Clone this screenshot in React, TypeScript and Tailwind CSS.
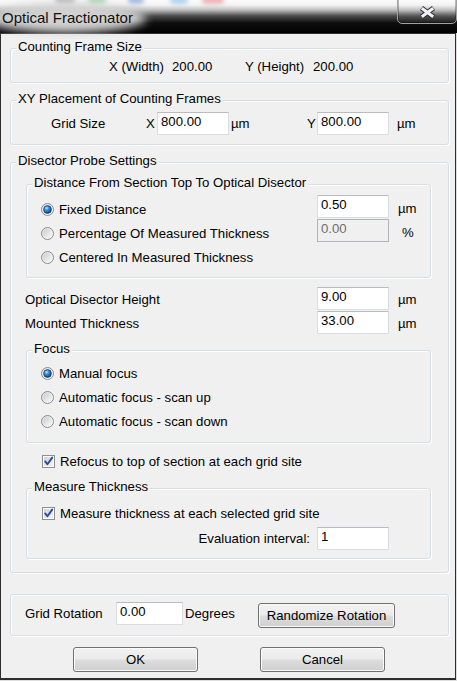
import React from "react";

function Radio({ checked }: { checked?: boolean }) {
  return (
    <svg width="13" height="13" viewBox="0 0 13 13" className="shrink-0">
      <defs>
        <linearGradient id="rOuter" x1="0" y1="0" x2="1" y2="1">
          <stop offset="0" stopColor="#dcdcdc" />
          <stop offset="1" stopColor="#fdfdfd" />
        </linearGradient>
        <linearGradient id="rInner" x1="0" y1="0" x2="1" y2="1">
          <stop offset="0" stopColor="#c9ccd1" />
          <stop offset="1" stopColor="#f8f8f8" />
        </linearGradient>
        <radialGradient id="rDot" cx="0.38" cy="0.32" r="0.7">
          <stop offset="0" stopColor="#c4ecff" />
          <stop offset="0.35" stopColor="#3b9be0" />
          <stop offset="1" stopColor="#0b3f80" />
        </radialGradient>
      </defs>
      <circle cx="6.5" cy="6.5" r="6" fill="url(#rOuter)" stroke="#8a8c8e" strokeWidth="1" />
      {checked ? (
        <>
          <circle cx="6.5" cy="6.5" r="4.8" fill="#ffffff" />
          <circle cx="6.5" cy="6.5" r="3.9" fill="url(#rDot)" stroke="#17386a" strokeWidth="0.8" />
        </>
      ) : (
        <circle cx="6.5" cy="6.5" r="4.3" fill="url(#rInner)" />
      )}
    </svg>
  );
}

function Check() {
  return (
    <svg width="13" height="13" viewBox="0 0 13 13" className="shrink-0">
      <defs>
        <linearGradient id="cbInner" x1="0" y1="0" x2="1" y2="1">
          <stop offset="0" stopColor="#cfd1d4" />
          <stop offset="1" stopColor="#f6f6f6" />
        </linearGradient>
      </defs>
      <rect x="0.5" y="0.5" width="12" height="12" fill="#ffffff" stroke="#8e8f8f" />
      <rect x="2" y="2" width="9" height="9" fill="url(#cbInner)" />
      <path d="M3.2 6.4 L5.4 9.3 L10.2 2.6" fill="none" stroke="#2b4a9e" strokeWidth="1.9" strokeLinejoin="round" strokeLinecap="round" />
    </svg>
  );
}

function GroupBox({
  caption,
  className,
  children,
}: {
  caption?: string;
  className: string;
  children?: React.ReactNode;
}) {
  return (
    <div
      className={`relative shrink-0 rounded-[3px] border border-[#d5dfe5] shadow-[inset_1px_1px_0_#ffffff,1px_1px_0_#ffffff] ${className}`}
    >
      {caption && (
        <span className="absolute left-[5px] top-[-10px] whitespace-nowrap bg-[#f0f0f0] px-[2px] leading-[15px]">
          {caption}
        </span>
      )}
      {children}
    </div>
  );
}

function Field({
  value,
  className,
  disabled,
}: {
  value: string;
  className: string;
  disabled?: boolean;
}) {
  return (
    <div
      className={`h-[23px] shrink-0 self-start border pl-[3px] pt-[1px] leading-[15px] ${
        disabled
          ? "border-[#b1b4b8] bg-[#f0f0f0] text-[#6d6d6d]"
          : "border-[#dadde2] border-t-[#b9bcc1] bg-white text-black"
      } ${className}`}
    >
      {value}
    </div>
  );
}

function Button({ label, className }: { label: string; className: string }) {
  return (
    <div
      className={`flex h-[25px] shrink-0 items-center justify-center rounded-[3px] border border-[#707070] bg-[linear-gradient(180deg,#f2f2f2_0%,#ebebeb_48%,#dddddd_52%,#cfcfcf_100%)] leading-[15px] shadow-[inset_0_0_0_1px_#fbfbfb] ${className}`}
    >
      {label}
    </div>
  );
}

export default function App() {
  return (
    <div className="relative h-[681px] w-[457px] overflow-hidden bg-[#dedede] text-[13.2px] text-black [font-family:'Liberation_Sans',Arial,sans-serif]">
      {/* Title bar */}
      <div className="relative flex h-[33px] items-start bg-[linear-gradient(180deg,#fbfbfb_0px,#f3f3f3_5px,#bdbdbd_10px,#4a4a4a_16px,#0e0e0e_23px,#000000_33px)] pl-[2px] pt-[9px]">
        <div className="absolute left-[55px] top-[-4px] h-[8px] w-[20px] rounded-full bg-[#7c7c7c] opacity-50 blur-[2px]" />
        <div className="absolute left-[88px] top-[-4px] h-[8px] w-[18px] rounded-full bg-[#62b873] opacity-50 blur-[2px]" />
        <div className="absolute left-[128px] top-[-4px] h-[8px] w-[16px] rounded-full bg-[#5a7fd0] opacity-50 blur-[2px]" />
        <div className="absolute left-[170px] top-[-4px] h-[8px] w-[18px] rounded-full bg-[#6eaee6] opacity-50 blur-[2px]" />
        <div className="absolute left-[202px] top-[-4px] h-[8px] w-[22px] rounded-full bg-[#e27070] opacity-50 blur-[2px]" />
        <div className="absolute left-[-14px] top-[3px] h-[30px] w-[160px] rounded-[50%] bg-[#d2d2d2] blur-[5px]" />
        <span className="relative text-[15px] leading-[18px] text-[#111111]">Optical Fractionator</span>
        <div className="absolute right-[0px] top-[-2px] flex h-[26px] w-[60px] items-center justify-center rounded-b-[5px] border border-[#a0a0a0] bg-[rgba(255,255,255,0.06)] pt-[2px] shadow-[inset_0_0_0_1px_rgba(0,0,0,0.25)]">
          <svg width="17" height="13" viewBox="0 0 17 13">
            <path d="M2.5 2 L14.5 11 M14.5 2 L2.5 11" stroke="#2a2a2a" strokeWidth="5" strokeLinecap="butt" />
            <path d="M2.8 2.2 L14.2 10.8 M14.2 2.2 L2.8 10.8" stroke="#f2f2f4" strokeWidth="3" strokeLinecap="butt" />
          </svg>
        </div>
      </div>

      {/* Body */}
      <div className="flex h-[647px] w-[456px] flex-col border border-b-2 border-[#2e2e2e] bg-[#f0f0f0]">
        <GroupBox caption="Counting Frame Size" className="ml-[9px] mt-[14px] h-[35px] w-[439px]">
          <div className="flex pl-[98px] pt-[10px] leading-[15px]">
            <span className="w-[63px]">X (Width)</span>
            <span className="w-[73px]">200.00</span>
            <span className="w-[68px]">Y (Height)</span>
            <span>200.00</span>
          </div>
        </GroupBox>

        <GroupBox caption="XY Placement of Counting Frames" className="ml-[9px] mt-[17px] h-[45px] w-[439px]">
          <div className="flex h-[34px] items-center pl-[40px] pt-[11px] leading-[15px]">
            <span className="w-[95px] self-center">Grid Size</span>
            <span className="w-[11px] self-center">X</span>
            <Field value="800.00" className="w-[72px]" />
            <span className="ml-[2px] w-[76px] self-center">µm</span>
            <span className="w-[10px] self-center">Y</span>
            <Field value="800.00" className="w-[72px]" />
            <span className="ml-[8px] self-center">µm</span>
          </div>
        </GroupBox>

        <GroupBox caption="Disector Probe Settings" className="ml-[9px] mt-[17px] flex h-[411px] w-[439px] flex-col">
          <GroupBox
            caption="Distance From Section Top To Optical Disector"
            className="ml-[15px] mt-[21px] flex h-[94px] w-[405px] flex-col pt-[10px]"
          >
            <div className="flex h-[24px] leading-[15px]">
              <div className="flex w-[290px] items-center pl-[14px] pt-[5px]">
                <Radio checked />
                <span className="ml-[5px]">Fixed Distance</span>
              </div>
              <Field value="0.50" className="w-[72px]" />
              <span className="ml-[9px] flex items-center pt-[3px]">µm</span>
            </div>
            <div className="flex h-[24px] leading-[15px]">
              <div className="flex w-[290px] items-center pl-[14px] pt-[5px]">
                <Radio />
                <span className="ml-[5px]">Percentage Of Measured Thickness</span>
              </div>
              <Field value="0.00" className="w-[72px]" disabled />
              <span className="ml-[13px] flex items-center pt-[3px]">%</span>
            </div>
            <div className="flex h-[24px] leading-[15px]">
              <div className="flex w-[290px] items-center pl-[14px] pt-[5px]">
                <Radio />
                <span className="ml-[5px]">Centered In Measured Thickness</span>
              </div>
            </div>
          </GroupBox>

          <div className="mt-[9px] flex h-[24px] leading-[15px]">
            <span className="flex w-[306px] items-center pl-[14px]">Optical Disector Height</span>
            <Field value="9.00" className="w-[72px]" />
            <span className="ml-[9px] flex items-center">µm</span>
          </div>
          <div className="flex h-[24px] leading-[15px]">
            <span className="flex w-[306px] items-center pl-[14px]">Mounted Thickness</span>
            <Field value="33.00" className="w-[72px]" />
            <span className="ml-[9px] flex items-center">µm</span>
          </div>

          <GroupBox caption="Focus" className="ml-[15px] mt-[15px] flex h-[93px] w-[405px] flex-col pt-[10px]">
            <div className="flex h-[24px] items-center pl-[14px] leading-[15px]">
              <Radio checked />
              <span className="ml-[5px]">Manual focus</span>
            </div>
            <div className="flex h-[24px] items-center pl-[14px] leading-[15px]">
              <Radio />
              <span className="ml-[5px]">Automatic focus - scan up</span>
            </div>
            <div className="flex h-[24px] items-center pl-[14px] leading-[15px]">
              <Radio />
              <span className="ml-[5px]">Automatic focus - scan down</span>
            </div>
          </GroupBox>

          <div className="mt-[6px] flex h-[24px] items-center pl-[31px] leading-[15px]">
            <Check />
            <span className="ml-[5px]">Refocus to top of section at each grid site</span>
          </div>

          <GroupBox caption="Measure Thickness" className="ml-[15px] mt-[15px] flex h-[71px] w-[405px] flex-col pt-[12px]">
            <div className="flex h-[24px] items-center pl-[15px] leading-[15px]">
              <Check />
              <span className="ml-[5px]">Measure thickness at each selected grid site</span>
            </div>
            <div className="mt-[2px] flex h-[23px] leading-[15px]">
              <span className="flex w-[290px] items-center justify-end pr-[7px]">Evaluation interval:</span>
              <Field value="1" className="w-[72px]" />
            </div>
          </GroupBox>
        </GroupBox>

        <GroupBox className="ml-[9px] mt-[21px] h-[42px] w-[439px]">
          <div className="flex pl-[14px] pt-[7px] leading-[15px]">
            <span className="flex h-[23px] w-[91px] items-center">Grid Rotation</span>
            <Field value="0.00" className="w-[67px]" />
            <span className="ml-[2px] flex h-[23px] w-[73px] items-center">Degrees</span>
            <Button label="Randomize Rotation" className="mt-[1px] w-[137px]" />
          </div>
        </GroupBox>

        <div className="mt-[11px] flex gap-[62px] pl-[72px]">
          <Button label="OK" className="w-[125px]" />
          <Button label="Cancel" className="w-[125px]" />
        </div>
      </div>
    </div>
  );
}
